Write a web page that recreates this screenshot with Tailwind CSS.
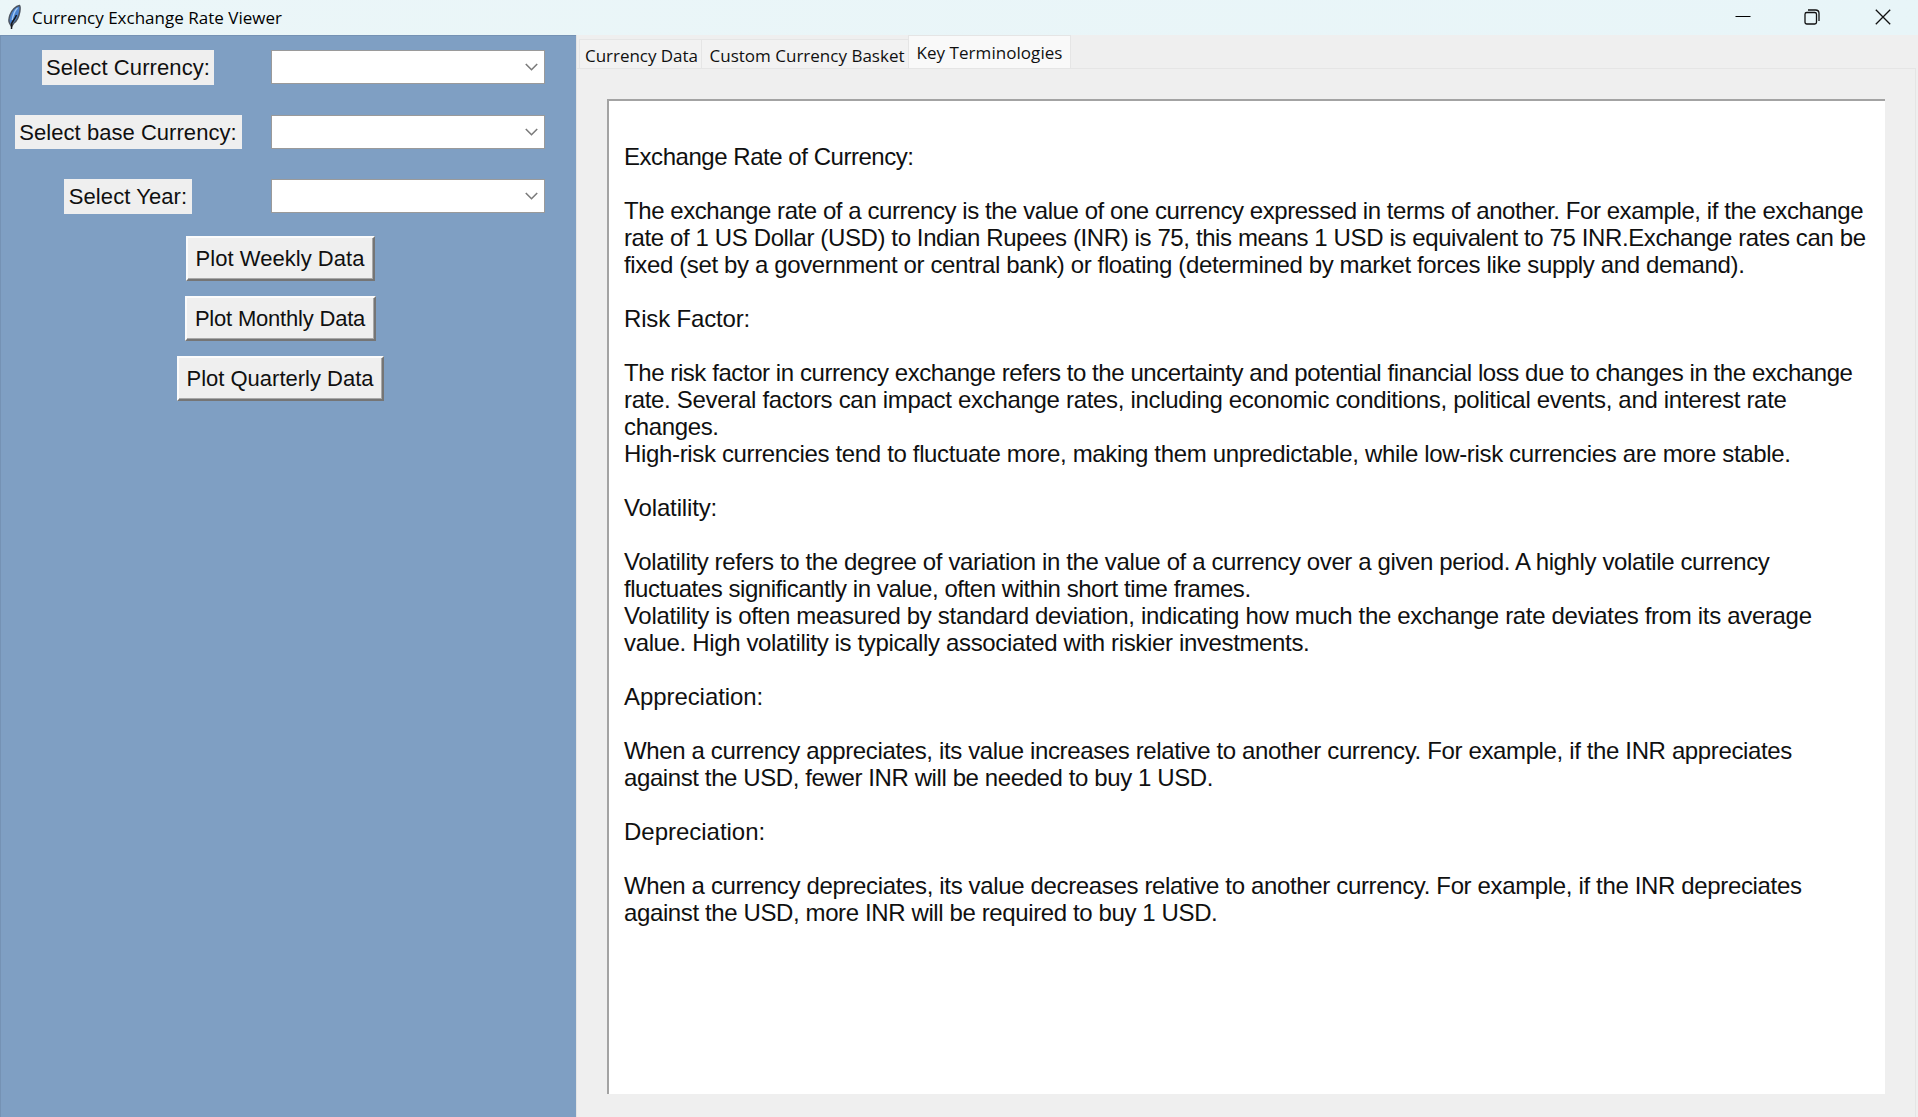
<!DOCTYPE html>
<html lang="en">
<head>
<meta charset="utf-8">
<title>Currency Exchange Rate Viewer</title>
<script src="https://cdn.jsdelivr.net/npm/@tailwindcss/browser@4"></script>
</head>
<body class="w-[1918px] h-[1117px] overflow-hidden flex flex-col bg-[#efefef] text-black font-['Liberation_Sans',Arial,sans-serif]">
<header class="h-[35px] shrink-0 flex items-center bg-linear-to-r from-[#ebf6f8] to-[#e8f5f8]">
  <svg class="ml-[7px] w-[15px] h-[26px] -mt-1.5 translate-y-[2px]" viewBox="0 0 15 26" fill="none">
    <path d="M12.5 1.5C9 2 4.800 6 3 11C2 14 1.500 17 2.500 19L4.500 22.500L6.500 19.500C10 17 12 12 12.800 7.500C13.200 5 13.400 2.500 12.500 1.500Z" fill="#4a83d0" stroke="#4d5560" stroke-width="1.500"/>
    <path d="M10.500 4C8 6.500 6 11 5.200 16" stroke="#a6cbf2" stroke-width="1.300"/>
    <path d="M9.500 11C8.500 14 6.500 16 4.800 19L4.500 25" stroke="#16181c" stroke-width="1.500"/>
  </svg>
  <h1 class="ml-[10px] text-[17px] leading-[35px] whitespace-nowrap tracking-[0.01px] font-['Open_Sans',sans-serif]">Currency Exchange Rate Viewer</h1>
  <div class="ml-auto flex items-center h-full pr-[27px] pb-[2px]">
    <svg class="w-4 h-4 mr-[53px]" viewBox="0 0 16 16" stroke="#000"><path d="M.5 7.500H15.500"/></svg>
    <svg class="w-4 h-4 mr-[55px]" viewBox="0 0 16 16" fill="none" stroke="#111" stroke-width="1.300"><rect x="1" y="3.500" width="11.500" height="11.500" rx="1.800"/><path d="M4 1H11.500Q15 1 15 4.500V12"/></svg>
    <svg class="w-4 h-4" viewBox="0 0 16 16" stroke="#111" stroke-width="1.300"><path d="M.8.8L15.200 15.200M15.200.8L.8 15.200"/></svg>
  </div>
</header>
<div class="flex flex-1 min-h-0">
  <aside class="w-[576px] shrink-0 bg-[#7f9fc3] border-l border-t border-[#7592b4] text-[22px] text-[#101010]">
    <div class="grid grid-cols-[254px_1fr] pt-[14px] gap-y-[30px]">
      <div class="flex justify-center h-[34.500px]"><label class="h-full leading-[35px] w-[172.500px] text-center whitespace-nowrap bg-[#efefef] tracking-[0.09px]">Select Currency:</label></div>
      <div class="ml-[16px] w-[274px] h-[34px] bg-white border border-[#9a9a9a] flex items-center justify-end pr-[6px]"><svg class="w-[13px] h-[8px]" viewBox="0 0 13 8" fill="none" stroke="#7b7b7b" stroke-width="1.600"><path d="M.8 1L6.500 6.700L12.200 1"/></svg></div>
      <div class="flex justify-center h-[34.500px]"><label class="h-full leading-[35px] w-[227px] text-center whitespace-nowrap bg-[#efefef] tracking-[0.04px]">Select base Currency:</label></div>
      <div class="ml-[16px] w-[274px] h-[34px] bg-white border border-[#9a9a9a] flex items-center justify-end pr-[6px]"><svg class="w-[13px] h-[8px]" viewBox="0 0 13 8" fill="none" stroke="#7b7b7b" stroke-width="1.600"><path d="M.8 1L6.500 6.700L12.200 1"/></svg></div>
      <div class="flex justify-center h-[34.500px]"><label class="h-full leading-[35px] w-[128px] text-center whitespace-nowrap bg-[#efefef] tracking-[0.09px]">Select Year:</label></div>
      <div class="ml-[16px] w-[274px] h-[34px] bg-white border border-[#9a9a9a] flex items-center justify-end pr-[6px]"><svg class="w-[13px] h-[8px]" viewBox="0 0 13 8" fill="none" stroke="#7b7b7b" stroke-width="1.600"><path d="M.8 1L6.500 6.700L12.200 1"/></svg></div>
    </div>
    <div class="flex flex-col items-center gap-[15px] mt-[22px] pr-[17px]">
      <button class="w-[189px] h-[45px] bg-[#efefef] border-2 border-t-[#fbfbfb] border-l-[#fbfbfb] border-r-[#757575] border-b-[#757575] shadow-[inset_-1px_-1px_0_#a8a8a8] whitespace-nowrap tracking-[0.03px]">Plot Weekly Data</button>
      <button class="w-[191px] h-[45px] bg-[#efefef] border-2 border-t-[#fbfbfb] border-l-[#fbfbfb] border-r-[#757575] border-b-[#757575] shadow-[inset_-1px_-1px_0_#a8a8a8] whitespace-nowrap tracking-[-0.2px]">Plot Monthly Data</button>
      <button class="w-[207px] h-[45px] bg-[#efefef] border-2 border-t-[#fbfbfb] border-l-[#fbfbfb] border-r-[#757575] border-b-[#757575] shadow-[inset_-1px_-1px_0_#a8a8a8] whitespace-nowrap tracking-[0px]">Plot Quarterly Data</button>
    </div>
  </aside>
  <main class="flex-1 flex flex-col min-w-0 border-l border-[#e3e3e3]">
    <nav class="h-[33px] shrink-0 flex items-end pl-[2px] text-[17px] whitespace-nowrap text-[#101010] font-['Open_Sans',sans-serif]">
      <div class="w-[123px] h-[29px] border border-b-0 border-[#e5e5e5] bg-[#f2f2f2] pl-[5px] leading-[32px] tracking-[-0.03px]">Currency Data</div>
      <div class="w-[206px] h-[29px] border-y border-b-0 border-[#e5e5e5] bg-[#f2f2f2] pl-[7.500px] leading-[32px] tracking-[0.01px]">Custom Currency Basket</div>
      <div class="w-[163px] h-[34px] -mb-px border border-b-0 border-[#e5e5e5] bg-[#f9f9f9] pl-[7.500px] leading-[34px] tracking-[0.05px]">Key Terminologies</div>
    </nav>
    <section class="flex-1 min-h-0 mr-[2px] border-t border-r border-[#e5e5e5] pl-[30px] pt-[30px]">
      <article class="w-[1278px] h-[995px] bg-white border-t-2 border-l-2 border-[#a3a3a3] pl-[15px] pt-[42px] text-[24px] leading-[27px] whitespace-nowrap text-[#101010]">
        <h2 class="tracking-[-0.460px]">Exchange Rate of Currency:</h2>
        <div class="py-[27px]">
          <p class="tracking-[-0.436px]">The exchange rate of a currency is the value of one currency expressed in terms of another. For example, if the exchange</p>
          <p class="tracking-[-0.387px]">rate of 1 US Dollar (USD) to Indian Rupees (INR) is 75, this means 1 USD is equivalent to 75 INR.Exchange rates can be</p>
          <p class="tracking-[-0.368px]">fixed (set by a government or central bank) or floating (determined by market forces like supply and demand).</p>
        </div>
        <h2 class="tracking-[-0.17px]">Risk Factor:</h2>
        <div class="py-[27px]">
          <p class="tracking-[-0.428px]">The risk factor in currency exchange refers to the uncertainty and potential financial loss due to changes in the exchange</p>
          <p class="tracking-[-0.308px]">rate. Several factors can impact exchange rates, including economic conditions, political events, and interest rate</p>
          <p class="tracking-[-0.350px]">changes.</p>
          <p class="tracking-[-0.344px]">High-risk currencies tend to fluctuate more, making them unpredictable, while low-risk currencies are more stable.</p>
        </div>
        <h2 class="tracking-[-0.15px]">Volatility:</h2>
        <div class="py-[27px]">
          <p class="tracking-[-0.374px]">Volatility refers to the degree of variation in the value of a currency over a given period. A highly volatile currency</p>
          <p class="tracking-[-0.450px]">fluctuates significantly in value, often within short time frames.</p>
          <p class="tracking-[-0.322px]">Volatility is often measured by standard deviation, indicating how much the exchange rate deviates from its average</p>
          <p class="tracking-[-0.355px]">value. High volatility is typically associated with riskier investments.</p>
        </div>
        <h2 class="tracking-[-0.07px]">Appreciation:</h2>
        <div class="py-[27px]">
          <p class="tracking-[-0.364px]">When a currency appreciates, its value increases relative to another currency. For example, if the INR appreciates</p>
          <p class="tracking-[-0.400px]">against the USD, fewer INR will be needed to buy 1 USD.</p>
        </div>
        <h2 class="tracking-[-0.02px]">Depreciation:</h2>
        <div class="pt-[27px]">
          <p class="tracking-[-0.350px]">When a currency depreciates, its value decreases relative to another currency. For example, if the INR depreciates</p>
          <p class="tracking-[-0.385px]">against the USD, more INR will be required to buy 1 USD.</p>
        </div>
      </article>
    </section>
  </main>
</div>
</body>
</html>
